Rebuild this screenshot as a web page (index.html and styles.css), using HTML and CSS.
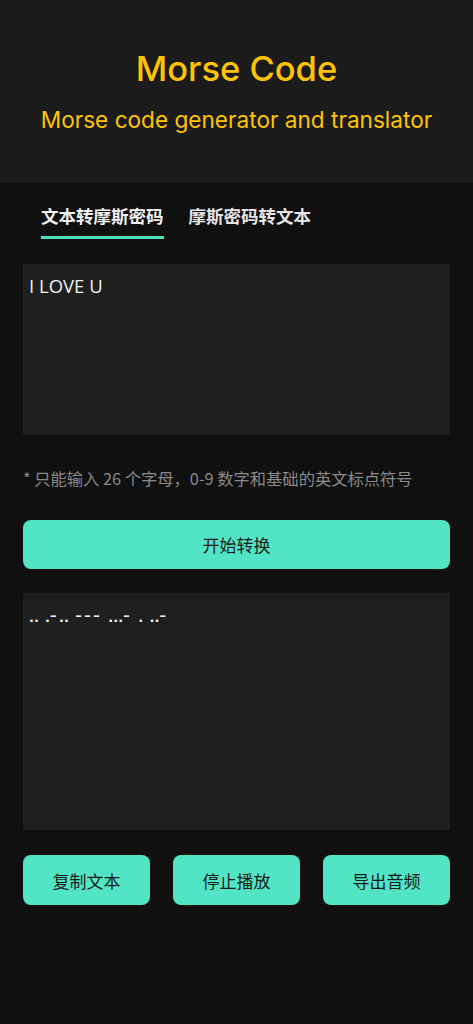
FILE: index.html
```html
<!DOCTYPE html>
<html lang="zh">
<head>
<meta charset="utf-8">
<link rel="stylesheet" href="styles.css">
</head>
<body>
<header class="hero">
  <h1 class="title">Morse Code</h1>
  <p class="subtitle">Morse code generator and translator</p>
</header>
<main class="main">
  <nav class="tabs">
    <div class="tab active">文本转摩斯密码</div>
    <div class="tab">摩斯密码转文本</div>
  </nav>
  <div class="box input-box">I LOVE U</div>
  <p class="hint">* 只能输入 26 个字母，0-9 数字和基础的英文标点符号</p>
  <button class="btn btn-wide">开始转换</button>
  <div class="box output-box">
    <div class="morse">.. .<span class="d">–</span>.. <span class="d">–––</span> ...<span class="d">–</span> . ..<span class="d">–</span></div>
  </div>
  <div class="actions">
    <button class="btn">复制文本</button>
    <button class="btn">停止播放</button>
    <button class="btn">导出音频</button>
  </div>
</main>
</body>
</html>
```
FILE: styles.css
```css
* { box-sizing: border-box; }
html, body { margin: 0; padding: 0; }
body {
  background: #101010;
  font-family: "Noto Sans CJK SC", "Noto Sans", sans-serif;
  color: #fff;
  min-height: 1024px;
}
.hero {
  background: #1b1b1b;
  height: 183px;
  display: flex;
  flex-direction: column;
  align-items: center;
  padding-top: 49px;
}
.title {
  margin: 0;
  font-family: "Inter", "Noto Sans", sans-serif;
  font-weight: 500;
  font-size: 34.5px;
  line-height: 40px;
  color: #ffc400;
}
.subtitle {
  margin: 16px 0 0;
  font-family: "Inter", "Noto Sans", sans-serif;
  font-weight: 400;
  font-size: 22.6px;
  line-height: 30px;
  color: #ffc400;
}
.main {
  padding: 0 23px;
}
.tabs {
  display: flex;
  gap: 25px;
  padding: 20px 18px 0;
  height: 81px;
}
.tab {
  font-size: 17.5px;
  font-weight: 700;
  line-height: 26px;
  color: #e6e6e6;
  height: 36px;
}
.tab.active {
  color: #f2f2f2;
  border-bottom: 3px solid #4fe0c3;
}
.box {
  background: #1f1f1f;
  padding: 10px 6px;
}
.input-box {
  height: 171px;
  font-family: "Open Sans", "Noto Sans", sans-serif;
  font-size: 18.5px;
  line-height: 24px;
  color: #f0f0f0;
}
.hint {
  margin: 33px 0 0;
  font-size: 16.3px;
  line-height: 20px;
  color: #8a8a8a;
  height: 52px;
}
.btn {
  border: none;
  background: #52e5c5;
  color: #1a1a1a;
  font-family: "Noto Sans CJK SC", sans-serif;
  font-size: 17px;
  border-radius: 8px;
  height: 50px;
  padding: 0;
}
.btn-wide {
  display: block;
  width: 100%;
  height: 49px;
}
.output-box {
  margin-top: 24px;
  height: 237px;
  padding: 13px 6px;
}
.morse {
  font-family: "DejaVu Sans", sans-serif;
  font-weight: 700;
  font-size: 13px;
  line-height: 20px;
  letter-spacing: 0.06px;
  word-spacing: 1.5px;
  color: #f0f0f0;
}
.d {
  letter-spacing: 2.5px;
  vertical-align: 1.5px;
}
.actions {
  margin-top: 25px;
  display: grid;
  grid-template-columns: repeat(3, 1fr);
  column-gap: 23px;
}
```
